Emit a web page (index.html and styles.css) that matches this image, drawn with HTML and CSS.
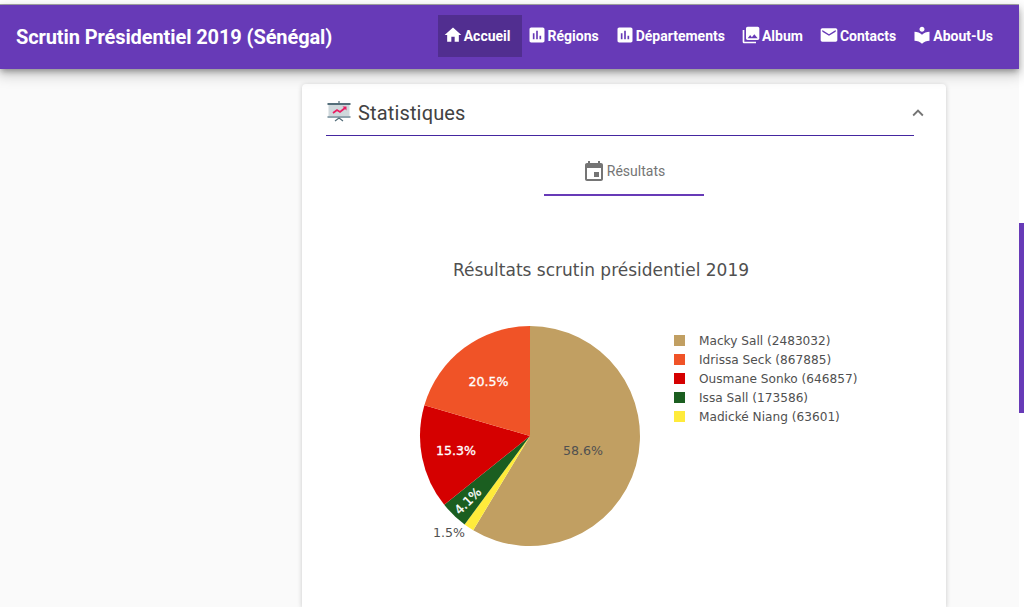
FILE: index.html
```html
<!DOCTYPE html>
<html lang="fr">
<head>
    <meta charset="UTF-8">
    <meta name="viewport" content="width=device-width, initial-scale=1.0">
    <title>Scrutin Présidentiel 2019</title>
    <link rel="stylesheet" href="styles.css">
</head>
<body>

<div class="page">
    <div class="top-line"></div>
    <header class="toolbar">
        <span class="brand">Scrutin Présidentiel 2019 (Sénégal)</span>
        <nav class="nav">
            <a class="nav-item active" href="#">
                <svg class="nav-icon" viewBox="0 0 24 24"><path d="M10 20v-6h4v6h5v-8h3L12 3 2 12h3v8z"/></svg>Accueil
            </a>
            <a class="nav-item" href="#">
                <svg class="nav-icon" viewBox="0 0 24 24"><path d="M19 3H5c-1.1 0-2 .9-2 2v14c0 1.1.9 2 2 2h14c1.1 0 2-.9 2-2V5c0-1.1-.9-2-2-2zM9 17H7v-7h2v7zm4 0h-2V7h2v10zm4 0h-2v-4h2v4z"/></svg>Régions
            </a>
            <a class="nav-item" href="#">
                <svg class="nav-icon" viewBox="0 0 24 24"><path d="M19 3H5c-1.1 0-2 .9-2 2v14c0 1.1.9 2 2 2h14c1.1 0 2-.9 2-2V5c0-1.1-.9-2-2-2zM9 17H7v-7h2v7zm4 0h-2V7h2v10zm4 0h-2v-4h2v4z"/></svg>Départements
            </a>
            <a class="nav-item" href="#">
                <svg class="nav-icon" viewBox="0 0 24 24"><path d="M22 16V4c0-1.1-.9-2-2-2H8c-1.1 0-2 .9-2 2v12c0 1.1.9 2 2 2h12c1.1 0 2-.9 2-2zm-11-4l2.03 2.71L16 11l4 5H8l3-4zM2 6v14c0 1.1.9 2 2 2h14v-2H4V6H2z"/></svg>Album
            </a>
            <a class="nav-item" href="#">
                <svg class="nav-icon" viewBox="0 0 24 24"><path d="M20 4H4c-1.1 0-1.99.9-1.99 2L2 18c0 1.1.9 2 2 2h16c1.1 0 2-.9 2-2V6c0-1.1-.9-2-2-2zm0 4l-8 5-8-5V6l8 5 8-5v2z"/></svg>Contacts
            </a>
            <a class="nav-item" href="#">
                <svg class="nav-icon" viewBox="0 0 24 24"><path d="M12 11.55C9.64 9.35 6.48 8 3 8v11c3.48 0 6.64 1.35 9 3.55 2.36-2.19 5.52-3.55 9-3.55V8c-3.48 0-6.64 1.35-9 3.55zM12 8c1.66 0 3-1.34 3-3s-1.34-3-3-3-3 1.34-3 3 1.34 3 3 3z"/></svg>About-Us
            </a>
        </nav>
    </header>

    <main class="content">
        <section class="card">
            <div class="card-head">
                <svg class="stat-icon" viewBox="0 0 24 22">
                    <rect x="11.4" y="0" width="1.2" height="3" fill="#546e7a"/>
                    <rect x="0.5" y="2" width="23" height="2" fill="#546e7a"/>
                    <rect x="1.5" y="4" width="21" height="11" fill="#cfd8dc"/>
                    <rect x="0.5" y="15" width="23" height="2" fill="#90a4ae"/>
                    <path d="M8 20l4-3 4 3" fill="none" stroke="#546e7a" stroke-width="1.2"/>
                    <path d="M6 12l4-3 3 2 5-4" fill="none" stroke="#e91e63" stroke-width="1.8"/>
                    <path d="M15.5 5.5h4v4z" fill="#e91e63"/>
                </svg>
                <h2 class="card-title">Statistiques</h2>
                <svg class="chevron" viewBox="0 0 24 24"><path d="M12 8l-6 6 1.41 1.41L12 10.83l4.59 4.58L18 14z"/></svg>
            </div>

            <div class="tabs">
                <div class="tab">
                    <svg class="tab-icon" viewBox="0 0 24 24"><path d="M17 12h-5v5h5v-5zM16 1v2H8V1H6v2H5c-1.11 0-1.99.9-1.99 2L3 19c0 1.1.89 2 2 2h14c1.1 0 2-.9 2-2V5c0-1.1-.9-2-2-2h-1V1h-2zm3 18H5V8h14v11z"/></svg>
                    <span>Résultats</span>
                </div>
            </div>

            <!-- viewBox uses the page coordinates of the chart -->
            <svg class="chart" viewBox="302 196 644 411">
                <text class="chart-title" x="601" y="276" text-anchor="middle">Résultats scrutin présidentiel 2019</text>

                <path fill="#c19f62" d="M530 436V326A110 110 0 1 1 473.22 530.22Z"/>
                <path fill="#ffeb3b" d="M530 436L473.22 530.22A110 110 0 0 1 464.6 524.45Z"/>
                <path fill="#1b5e20" d="M530 436L464.6 524.45A110 110 0 0 1 444.23 504.87Z"/>
                <path fill="#d50000" d="M530 436L444.23 504.87A110 110 0 0 1 424.38 405.27Z"/>
                <path fill="#f05327" d="M530 436L424.38 405.27A110 110 0 0 1 530 326Z"/>

                <text class="slice dark" x="583" y="455" text-anchor="middle">58.6%</text>
                <text class="slice light" x="488.500" y="386" text-anchor="middle">20.5%</text>
                <text class="slice light" x="456" y="455" text-anchor="middle">15.3%</text>
                <text class="slice light" text-anchor="middle" transform="translate(471 504) rotate(-45)">4.1%</text>
                <text class="slice dark" x="449" y="537" text-anchor="middle">1.5%</text>

                <rect x="674" y="335" width="11" height="11" fill="#c19f62"/>
                <rect x="674" y="354" width="11" height="11" fill="#f05327"/>
                <rect x="674" y="373" width="11" height="11" fill="#d50000"/>
                <rect x="674" y="392" width="11" height="11" fill="#1b5e20"/>
                <rect x="674" y="411" width="11" height="11" fill="#ffeb3b"/>
                <text class="legend" x="699" y="345">Macky Sall (2483032)</text>
                <text class="legend" x="699" y="364">Idrissa Seck (867885)</text>
                <text class="legend" x="699" y="383">Ousmane Sonko (646857)</text>
                <text class="legend" x="699" y="402">Issa Sall (173586)</text>
                <text class="legend" x="699" y="421">Madické Niang (63601)</text>
            </svg>
        </section>
    </main>
</div>

<div class="scrollbar"><div class="thumb"></div></div>

</body>
</html>
```

FILE: styles.css
```css
html,
body {
    height: 100%;
}

body {
    font-family: Roboto, "Liberation Sans", sans-serif;
    margin: 0;
    padding: 0;
    display: flex;
    overflow: hidden;
    background-color: #fff;
}

.page {
    flex: 1;
    min-width: 0;
    display: flex;
    flex-direction: column;
    background-color: #fafafa;
}

.top-line {
    height: 5px;
    box-sizing: border-box;
    background-color: #fff;
    border-bottom: 1px solid #a8a8a8;
}

.toolbar {
    position: relative;
    z-index: 2;
    height: 64px;
    flex-shrink: 0;
    display: flex;
    align-items: center;
    justify-content: space-between;
    padding: 0 16px;
    background-color: #673ab7;
    color: white;
    box-shadow: 0 3px 6px -1px rgba(0, 0, 0, .35), 0 5px 12px 2px rgba(0, 0, 0, .18);
}

.brand {
    font-size: 20px;
    font-weight: 700;
    letter-spacing: -.1px;
}

.nav {
    display: flex;
    height: 42px;
    margin-top: -2px;
    margin-right: -1px;
}

.nav-item {
    display: flex;
    align-items: center;
    gap: 1px;
    padding: 0 11px 0 5px;
    color: white;
    text-decoration: none;
    font-size: 14px;
    font-weight: 700;
}

.nav-item.active {
    background-color: #512e90;
}

.nav-icon {
    width: 20px;
    height: 20px;
    fill: white;
    margin-top: -2px;
}

.content {
    flex: 1;
    min-height: 0;
    display: flex;
    padding: 15px 73px 0 302px;
}

.card {
    flex: 1;
    min-width: 0;
    background-color: #fff;
    border-radius: 4px 4px 0 0;
    box-shadow: 0 1px 5px rgba(0, 0, 0, .2);
}

.card-head {
    display: flex;
    align-items: center;
    height: 52px;
    padding-top: 6px;
    margin: 0 32px 0 24px;
    box-sizing: border-box;
    border-bottom: 1px solid #4527a0;
}

.stat-icon {
    width: 24px;
    height: 22px;
    margin: -2px 7px 0 1px;
}

.card-title {
    flex: 1;
    margin: 0;
    font-size: 20px;
    font-weight: 400;
    color: #424242;
    letter-spacing: .15px;
}

.chevron {
    width: 22px;
    height: 22px;
    fill: #757575;
    margin: 0 -15px 0 0;
}

.tabs {
    display: flex;
    justify-content: center;
    margin-left: -1px;
}

.tab {
    width: 160px;
    height: 60px;
    box-sizing: border-box;
    display: flex;
    align-items: center;
    justify-content: center;
    gap: 1px;
    padding-top: 12px;
    border-bottom: 2px solid #673ab7;
    font-size: 14px;
    color: #757575;
}

.tab-icon {
    width: 24px;
    height: 24px;
    fill: #757575;
    margin-top: 2px;
}

.chart {
    display: block;
    width: 644px;
    height: 411px;
}

.chart text {
    font-family: "DejaVu Sans", Verdana, sans-serif;
}

.chart-title {
    font-size: 17px;
    fill: #505050;
}

.slice {
    font-size: 12.600px;
}

.slice.dark {
    fill: #505050;
}

.slice.light {
    fill: #fff;
    stroke: #fff;
    stroke-width: .3px;
}

.legend {
    font-size: 12.150px;
    fill: #505050;
}

.scrollbar {
    width: 5px;
    flex-shrink: 0;
    padding-top: 223px;
    background-color: #fff;
}

.thumb {
    height: 190px;
    background-color: #673ab7;
}
```
